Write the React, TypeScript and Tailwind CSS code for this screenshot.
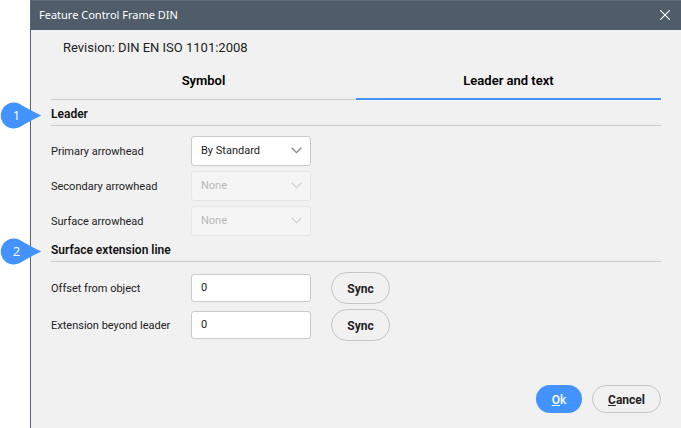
import { useState } from "react";
import type { ReactNode } from "react";

function Marker({ value }: { value: number }) {
  return (
    <svg
      className="absolute -left-[51px] top-0 h-[27px] w-[42px]"
      viewBox="0 0 42 27"
      role="img"
      aria-label={`Callout ${value}`}
    >
      <path
        d="M13.8 0.5C18 0.5 21 2.6 24.5 4.7C30 8 35.5 10.8 41.2 13.5C35.5 16.2 30 19 24.5 22.3C21 24.4 18 26.5 13.8 26.5A13 13 0 0 1 13.8 0.5Z"
        fill="#4293ff"
      />
      <text
        x="16.5"
        y="18"
        textAnchor="middle"
        fill="#ffffff"
        className="font-['Open_Sans',sans-serif] text-[13px]"
      >
        {value}
      </text>
    </svg>
  );
}

function SectionTitle({ marker, children }: { marker: number; children: ReactNode }) {
  return (
    <div className="relative h-[24px] border-b border-[#cccccc]">
      <h2 className="pt-1 text-[12px] leading-4 font-semibold text-[#111111]">{children}</h2>
      <Marker value={marker} />
    </div>
  );
}

function SelectRow({
  id,
  label,
  options,
  disabled,
}: {
  id: string;
  label: string;
  options: string[];
  disabled?: boolean;
}) {
  return (
    <div className="flex items-center">
      <label htmlFor={id} className="w-[140px] shrink-0 pt-[2px]">
        {label}
      </label>
      <div className="relative w-[120px]">
        <select
          id={id}
          disabled={disabled}
          className="block h-[30px] w-full appearance-none rounded-[3px] border border-[#cacaca] bg-white pr-7 pl-[9px] text-[11px] text-[#222222] disabled:border-[#e6e6e6] disabled:bg-[#f5f5f5] disabled:text-[#b8b8b8] disabled:opacity-100"
        >
          {options.map((option) => (
            <option key={option}>{option}</option>
          ))}
        </select>
        <svg
          className={`pointer-events-none absolute top-[11px] right-[9px] h-[7px] w-[11px] ${disabled ? "text-[#d2d2d2]" : "text-[#868686]"}`}
          viewBox="0 0 11 7"
          fill="none"
          stroke="currentColor"
          strokeWidth="1.3"
          aria-hidden="true"
        >
          <path d="M0.7 0.7L5.5 5.6L10.3 0.7" />
        </svg>
      </div>
    </div>
  );
}

function ValueRow({ id, label }: { id: string; label: string }) {
  const [value, setValue] = useState("0");
  return (
    <div className="flex items-center">
      <label htmlFor={id} className="w-[140px] shrink-0 pt-[2px]">
        {label}
      </label>
      <input
        id={id}
        type="text"
        value={value}
        onChange={(event) => setValue(event.target.value)}
        className="h-[28px] w-[120px] rounded-[3px] border border-[#cacaca] bg-white px-[9px] pb-px text-[11px] text-[#222222]"
      />
      <button
        type="button"
        className="ml-5 h-8 w-[59px] rounded-full border border-[#c4c4c4] pt-[2px] text-[12px] font-bold text-[#222222]"
      >
        Sync
      </button>
    </div>
  );
}

export default function App() {
  return (
    <div className="min-h-screen bg-white pl-[30px] font-['Roboto',sans-serif]">
      <section
        aria-labelledby="dialog-title"
        className="flex min-h-screen flex-col border-l border-[#59647a] bg-[#f1f1f1]"
      >
        <header className="flex h-[30px] items-center justify-between border-t border-[#5f6b79] bg-[#505c69] pr-[11px] pb-px pl-2">
          <h1
            id="dialog-title"
            className="font-['Noto_Sans','Open_Sans',sans-serif] text-[11px] text-white"
          >
            Feature Control Frame DIN
          </h1>
          <button type="button" aria-label="Close">
            <svg
              className="block size-[10px]"
              viewBox="0 0 10 10"
              stroke="#ffffff"
              strokeWidth="1.1"
              aria-hidden="true"
            >
              <path d="M0.3 0.3L9.7 9.7M9.7 0.3L0.3 9.7" />
            </svg>
          </button>
        </header>

        <div className="flex grow flex-col px-5 text-[11px] leading-4 text-[#222222]">
          <p className="mt-[10px] ml-3 text-[13px]">Revision: DIN EN ISO 1101:2008</p>

          <div role="tablist" className="mt-4 flex text-[13px] font-semibold text-black">
            <button
              type="button"
              role="tab"
              aria-selected={false}
              className="h-7 flex-1 border-b border-[#cccccc] pb-[9px]"
            >
              Symbol
            </button>
            <button
              type="button"
              role="tab"
              aria-selected={true}
              className="h-7 flex-1 border-b-2 border-[#4293ff] pb-2"
            >
              Leader and text
            </button>
          </div>

          <div className="mt-[2px]">
            <SectionTitle marker={1}>Leader</SectionTitle>
            <div className="mt-[10px] flex flex-col gap-[5px]">
              <SelectRow
                id="primary"
                label="Primary arrowhead"
                options={["By Standard", "None"]}
              />
              <SelectRow id="secondary" label="Secondary arrowhead" options={["None"]} disabled />
              <SelectRow id="surface" label="Surface arrowhead" options={["None"]} disabled />
            </div>
          </div>

          <div className="mt-[2px]">
            <SectionTitle marker={2}>Surface extension line</SectionTitle>
            <div className="mt-[10px] flex flex-col gap-[5px]">
              <ValueRow id="offset" label="Offset from object" />
              <ValueRow id="extension" label="Extension beyond leader" />
            </div>
          </div>

          <footer className="mt-auto flex justify-end gap-[10px] pb-[15px] text-[12px]">
            <button
              type="button"
              className="h-7 w-[46px] rounded-full bg-[#4293ff] pt-[2px] font-medium text-white"
            >
              <span className="underline">O</span>k
            </button>
            <button
              type="button"
              className="h-7 w-[69px] rounded-full border border-[#c4c4c4] pt-[2px] font-bold text-[#222222]"
            >
              <span className="underline">C</span>ancel
            </button>
          </footer>
        </div>
      </section>
    </div>
  );
}
